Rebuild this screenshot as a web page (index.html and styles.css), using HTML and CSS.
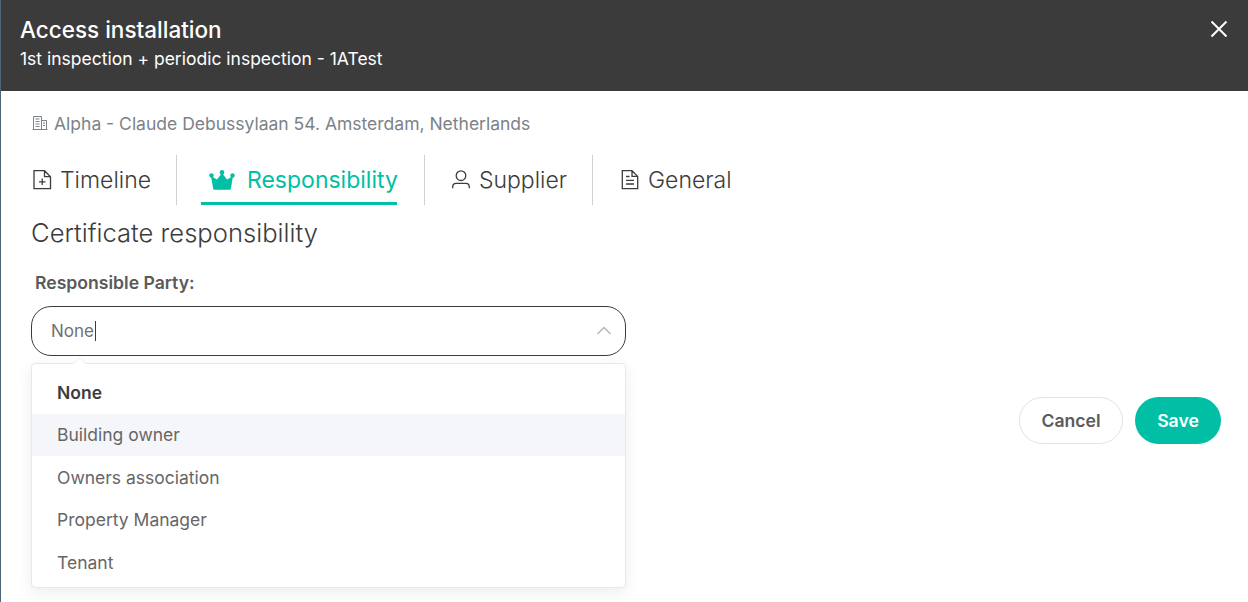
FILE: index.html
```html
<!DOCTYPE html>
<html lang="en">
<head>
<meta charset="utf-8">
<title>Access installation</title>
<link rel="stylesheet" href="styles.css">
</head>
<body>
<div class="modal">
  <header class="head">
    <div>
      <h1 class="title">Access installation</h1>
      <p class="subtitle">1st inspection + periodic inspection - 1ATest</p>
    </div>
    <svg class="close" width="18" height="18" viewBox="0 0 18 18" aria-label="Close"><path d="M1.500 1.500 L16.500 16.500 M16.500 1.500 L1.500 16.500" stroke="#fff" stroke-width="2" fill="none"/></svg>
  </header>
  <main class="body">
    <div class="address">
      <svg class="addr-icon" width="16" height="16" viewBox="0 0 16 16" fill="none" stroke="#7b8288" stroke-width="1"><path d="M1.5 14.5V1.5H9.5V14.5M9.5 5.5H14.5V14.5M.5 14.5H15.5M3.5 4H7.5M3.5 6.5H7.5M3.5 9H7.5M3.5 11.5H7.5M11 8H13M11 10.5H13"/></svg>
      <span>Alpha - Claude Debussylaan 54. Amsterdam, Netherlands</span>
    </div>
    <nav class="tabs">
      <a class="tab tab-first">
        <svg width="20" height="20" viewBox="0 0 20 20" fill="none" stroke="#3c3c3c" stroke-width="1.3"><path d="M2 .7H12.500L18.500 6.700V18.700H2ZM12.500 .7V6.700H18.500M10.200 8.500V15M7 11.800H13.400"/></svg>
        <span>Timeline</span>
      </a>
      <a class="tab tab-active">
        <svg width="26" height="20" viewBox="0 0 26 20" fill="#00bfa5"><circle cx="2.5" cy="5.5" r="2.2"/><circle cx="13" cy="2.4" r="2.3"/><circle cx="23.5" cy="5.5" r="2.2"/><path d="M2 6 L8 9.500 L13 3 L18 9.500 L24 6 L21.800 19 Q21.600 19.800 20.800 19.800 H5.200 Q4.400 19.800 4.200 19Z"/></svg>
        <span>Responsibility</span>
      </a>
      <a class="tab">
        <svg width="20" height="20" viewBox="0 0 20 20" fill="none" stroke="#3c3c3c" stroke-width="1.3"><circle cx="10" cy="5.700" r="4.800"/><path d="M1.700 18.300V17Q1.700 13.300 5.200 13.300H14.800Q18.300 13.300 18.300 17V18.300"/></svg>
        <span>Supplier</span>
      </a>
      <a class="tab tab-last">
        <svg width="20" height="20" viewBox="0 0 20 20" fill="none" stroke="#3c3c3c" stroke-width="1.3"><path d="M2.300 .7H12L17.700 6.400V18.700H2.300ZM12 .7V6.400H17.700M6 6.500H9.500M6 10.300H14M6 14H14"/></svg>
        <span>General</span>
      </a>
    </nav>
    <h2 class="section">Certificate responsibility</h2>
    <label class="field-label">Responsible Party:</label>
    <div class="select-wrap">
      <div class="select">
        <span class="value">None</span><span class="caret"></span>
        <svg class="chev" width="16" height="9" viewBox="0 0 16 9" fill="none" stroke="#b4b4b4" stroke-width="1.300"><path d="M1.500 8L8 1.500L14.500 8"/></svg>
      </div>
      <div class="menu">
        <span class="arrow"></span>
        <div class="opt opt-selected">None</div>
        <div class="opt opt-hover">Building owner</div>
        <div class="opt">Owners association</div>
        <div class="opt">Property Manager</div>
        <div class="opt">Tenant</div>
      </div>
    </div>
    <div class="actions">
      <button class="btn btn-cancel">Cancel</button>
      <button class="btn btn-save">Save</button>
    </div>
  </main>
</div>
</body>
</html>
```
FILE: styles.css
```css
* { box-sizing: border-box; }
html, body { margin: 0; height: 100%; overflow: hidden; }
body {
  background: #fff;
  font-family: Inter, "Liberation Sans", sans-serif;
  border-left: 1px solid #4d6479;
}
.modal { height: 602px; }
.head {
  height: 91px;
  background: #3b3b3b;
  color: #fff;
  display: flex;
  justify-content: space-between;
  padding: 17px 20px 0 19px;
}
.title { margin: 0; font-size: 22.5px; line-height: 26px; font-weight: 500; }
.subtitle { margin: 4px 0 0; font-size: 17.5px; line-height: 24px; font-weight: 400; }
.close { margin-top: 3px; }
.body { padding: 0 26px 0 30px; }
.address {
  display: flex;
  align-items: center;
  gap: 6px;
  height: 24px;
  margin-top: 20px;
  margin-left: 1px;
  color: #7b8288;
  font-size: 17.5px;
}
.tabs { display: flex; margin-top: 20px; height: 50px; }
.tab {
  display: flex;
  align-items: center;
  gap: 8px;
  height: 50px;
  padding: 0 25px 0 26px;
  font-size: 23px;
  color: #3c3c3c;
  border-right: 1px solid #cfcfcf;
  font-weight: 300;
}
.tab-first { padding-left: 1px; padding-right: 25px; }
.tab-last { border-right: 0; padding-left: 27px; }
.tab-active {
  position: relative;
  color: #00bfa5;
  font-weight: 400;
  padding: 0 26px 0 32px;
  gap: 12px;
}
.tab-active::after {
  content: "";
  position: absolute;
  left: 24px;
  right: 27px;
  bottom: 0;
  height: 3px;
  background: #00bfa5;
}
.section {
  margin: 12px 0 0;
  font-size: 25.6px;
  line-height: 32px;
  font-weight: 300;
  color: #3c3c3c;
}
.field-label {
  display: block;
  margin: 24px 0 0 4px;
  font-size: 17.6px;
  line-height: 20px;
  font-weight: 600;
  color: #5a5a5a;
}
.select-wrap { position: relative; width: 595px; margin-top: 13px; }
.select {
  position: relative;
  display: flex;
  align-items: center;
  height: 50px;
  padding-left: 19px;
  border: 1px solid #3c3c3c;
  border-radius: 20px;
  font-size: 17px;
  color: #707070;
}
.caret { width: 1px; height: 20px; background: #3c3c3c; margin-left: 1px; }
.chev { position: absolute; right: 13px; top: 19px; }
.menu {
  position: absolute;
  z-index: 2;
  left: 0;
  right: 0;
  top: 57px;
  height: 225px;
  padding: 7px 0 8px;
  background: #fff;
  border: 1px solid #e6e8ee;
  border-radius: 4px;
  box-shadow: 0 4px 14px rgba(40, 50, 70, .09);
}
.arrow {
  position: absolute;
  left: 43px;
  top: -5px;
  width: 9px;
  height: 9px;
  background: #fff;
  border-top: 1px solid #eef0f4;
  border-left: 1px solid #eef0f4;
  transform: rotate(45deg);
}
.opt {
  height: 42.500px;
  padding-left: 25px;
  display: flex;
  align-items: center;
  font-size: 17.5px;
  color: #666;
  position: relative;
}
.opt-selected { font-weight: 600; color: #3c3c3c; }
.opt-hover { background: #f5f6fa; }
.actions {
  display: flex;
  justify-content: flex-end;
  gap: 12px;
  margin-top: 41px;
  padding-right: 1px;
}
.btn {
  height: 47px;
  border-radius: 24px;
  font-family: inherit;
  font-size: 17.6px;
  font-weight: 600;
  padding: 0;
}
.btn-cancel { width: 104px; background: #fff; border: 1px solid #e1e1ea; color: #5a5a5a; }
.btn-save { width: 86px; background: #00bfa5; border: 0; color: #fff; }
```
